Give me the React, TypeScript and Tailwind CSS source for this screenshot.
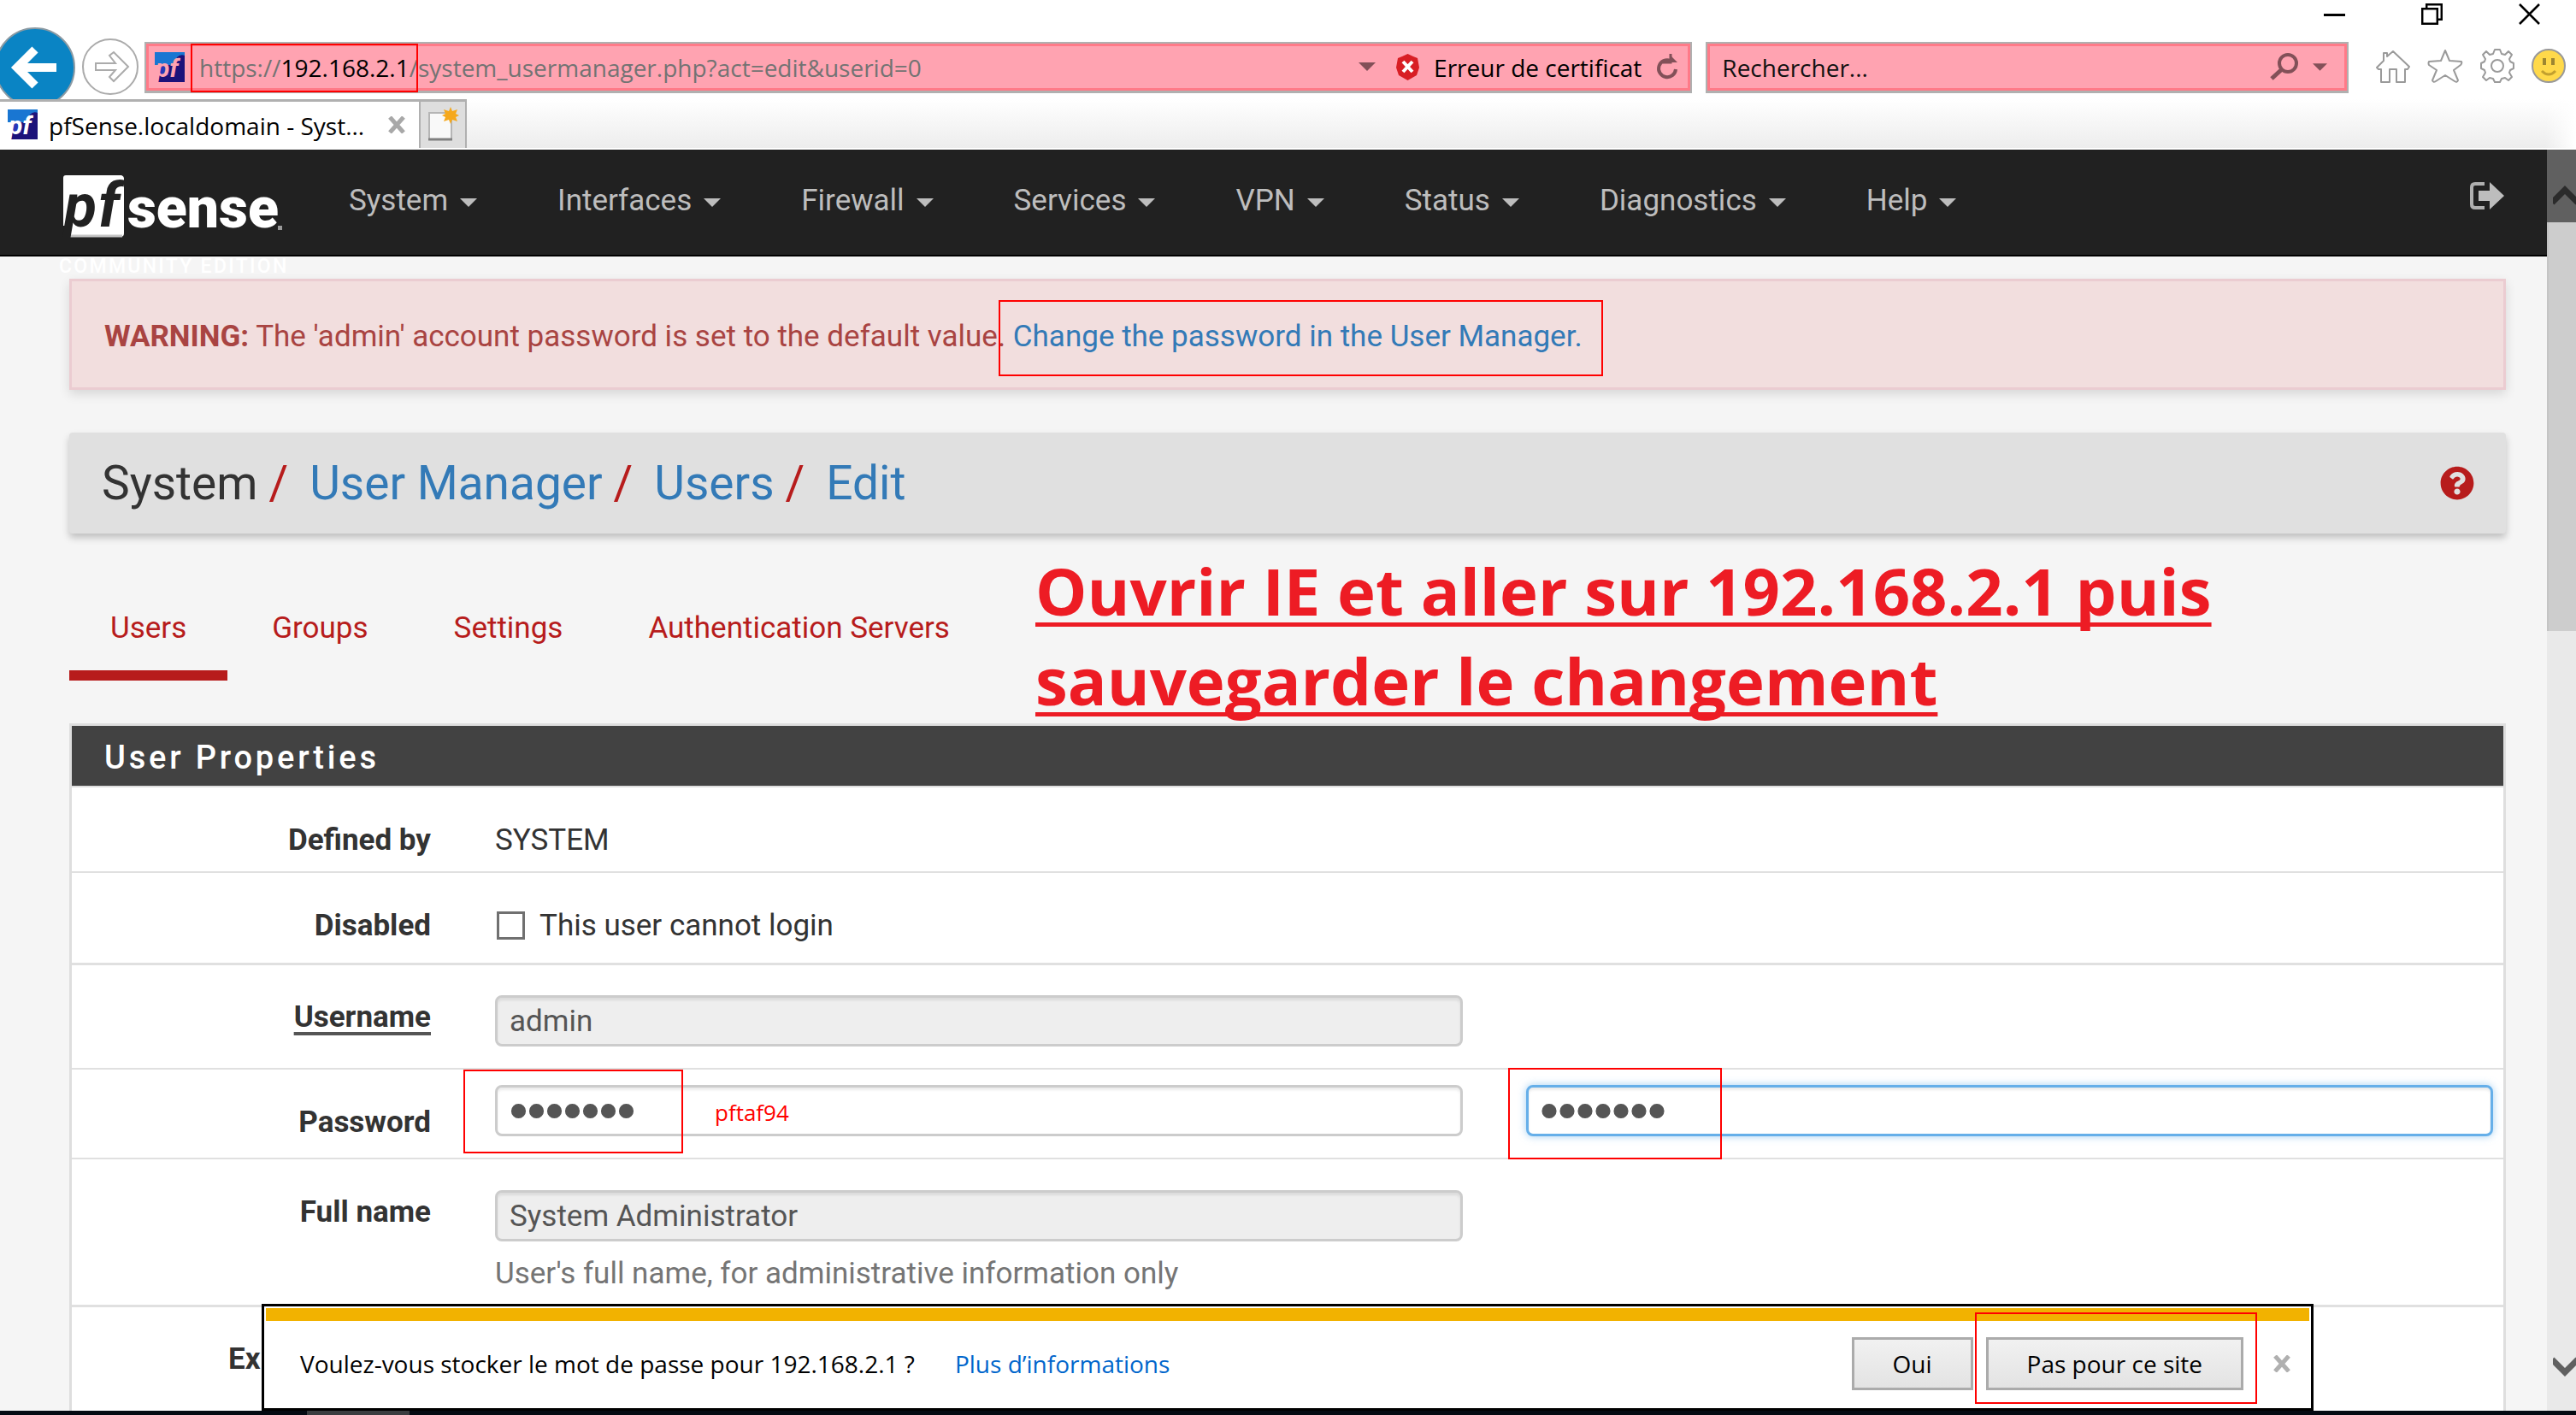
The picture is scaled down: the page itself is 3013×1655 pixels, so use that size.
import React from "react";
import { FaQuestionCircle } from "react-icons/fa";

const CHROME_FONT = "font-['Open_Sans','Noto_Sans',sans-serif]";
const PAGE_FONT = "font-[Roboto,'Liberation_Sans',sans-serif]";

function Favicon({ light }: { light: string }) {
  return (
    <svg className="h-[35px] w-[35px] shrink-0 overflow-visible" viewBox="0 0 35 35" aria-hidden="true">
      <path d="M0 0H35V4Q27 5 25 12L23 15H0Z" fill="#1976d2" />
      <path d="M4 35L6 15H22L26 6Q30 2 35 4V35Z" fill="#1c127a" />
      <path d="M6 17H16V27H5Z" fill="#2638b8" />
      <text x="1" y="29" fontFamily="Roboto, sans-serif" fontSize="30" fontWeight="700" fontStyle="italic" fill={light}>
        pf
      </text>
    </svg>
  );
}

function Caret({ className }: { className: string }) {
  return (
    <svg className={className} viewBox="0 0 20 10" aria-hidden="true">
      <path d="M0 0H20L10 10Z" fill="currentColor" />
    </svg>
  );
}

function WindowControls() {
  return (
    <div className="flex h-8 items-start justify-end gap-[89px] pr-[42px] pt-1 text-black">
      <button type="button" aria-label="Réduire">
        <svg className="block h-[25px] w-[25px]" viewBox="0 0 25 25">
          <path d="M0 13.500H25" stroke="currentColor" strokeWidth="3" />
        </svg>
      </button>
      <button type="button" aria-label="Restaurer">
        <svg className="block h-[25px] w-[25px]" viewBox="0 0 25 25" fill="none" stroke="currentColor" strokeWidth="2.500">
          <path d="M1.200 6.200H18.800V23.800H1.200Z" />
          <path d="M6.200 6V1.200H23.800V18.800H19" />
        </svg>
      </button>
      <button type="button" aria-label="Fermer">
        <svg className="block h-[25px] w-[25px]" viewBox="0 0 25 25" stroke="currentColor" strokeWidth="2.500">
          <path d="M1 1L24 24M24 1L1 24" />
        </svg>
      </button>
    </div>
  );
}

function AddressRow() {
  return (
    <div className="flex h-21 items-start">
      <button type="button" aria-label="Précédent" className="-ml-[6px] h-[84px] w-[94px] shrink-0 overflow-hidden">
        <svg className="block h-[94px] w-[94px]" viewBox="0 0 94 94">
          <circle cx="47" cy="47" r="46" fill="#0a84c4" stroke="#8b9aa3" strokeWidth="2" />
          <path d="M72 47H28" stroke="#fff" strokeWidth="10" fill="none" />
          <path d="M47 26L26 47L47 68" stroke="#fff" strokeWidth="10" fill="none" />
        </svg>
      </button>
      <button type="button" aria-label="Suivant" className="ml-2 mt-[13px] shrink-0">
        <svg className="block h-[66px] w-[66px]" viewBox="0 0 66 66" fill="none" stroke="#ababab" strokeWidth="2">
          <circle cx="33" cy="33" r="32" />
          <path d="M16 29H39L32 20L37 16L54 33L37 50L32 45L39 37H16Z" />
        </svg>
      </button>
      <div className="ml-[7px] mt-[17px] flex h-15 flex-[1812] items-center border-2 border-b-[3px] border-[#b0b0b0] bg-[#ffa3b1] text-[28px]">
        <div className="flex h-full w-full items-center border-[3px] border-[#ff7a88] pl-[7px] pr-[11px]">
          <Favicon light="#ffa3b1" />
          <div className="relative ml-[17px] whitespace-nowrap pt-[2px] leading-10 text-[#737373]">
            <span>
              https://<span className="text-black">192.168.2.1</span>/
            </span>
            <span>system_usermanager.php?act=edit&amp;userid=0</span>
            <div className="pointer-events-none absolute -left-[10px] -top-[6px] h-[57px] w-[266px] border-2 border-[#ff0000]" />
          </div>
          <div className="grow" />
          <button type="button" aria-label="Afficher la liste d’adresses" className="text-[#825058]">
            <Caret className="block h-[10px] w-5" />
          </button>
          <svg className="ml-6 h-[31px] w-[27px]" viewBox="0 0 27 31" aria-hidden="true">
            <path d="M13.500 0L20 3L25 5L27 16L24 25L13.500 31L3 25L0 16L2 5L7 3Z" fill="#d81e24" />
            <path d="M8 9L19 21M19 9L8 21" stroke="#fff" strokeWidth="4" />
          </svg>
          <span className="ml-[17px] whitespace-nowrap pt-[2px] text-black">Erreur de certificat</span>
          <button type="button" aria-label="Actualiser" className="ml-4">
            <svg className="block h-[31px] w-[27px]" viewBox="0 0 27 31" fill="none" stroke="#825058" strokeWidth="4">
              <path d="M18 8A10 10 0 1 0 24 18" />
              <path d="M18 0V10H9" strokeWidth="3" />
              <path d="M17 1L26 10H17Z" fill="#825058" stroke="none" />
            </svg>
          </button>
        </div>
      </div>
      <div className="ml-4 mt-[17px] flex h-15 flex-[750] items-center border-2 border-b-[3px] border-[#b0b0b0] bg-[#ffa3b1] text-[28px]">
        <div className="flex h-full w-full items-center border-[3px] border-[#ff7a88] pl-[14px] pr-5">
          <input
            type="text"
            aria-label="Rechercher"
            placeholder="Rechercher..."
            className="w-0 grow bg-transparent pt-[2px] leading-10 text-black outline-none placeholder:text-[#111] placeholder:opacity-100"
          />
          <button type="button" aria-label="Lancer la recherche" className="flex items-center gap-4 text-[#825058]">
            <svg className="block h-8 w-[34px]" viewBox="0 0 34 32" fill="none" stroke="currentColor">
              <circle cx="21" cy="12" r="10" strokeWidth="4" />
              <path d="M14 19L2 30" strokeWidth="5" />
            </svg>
            <Caret className="block h-[9px] w-[17px]" />
          </button>
        </div>
      </div>
      <div className="ml-8 mr-3 mt-[25px] flex shrink-0 gap-5">
        <button type="button" aria-label="Accueil">
          <svg className="block h-10 w-10" viewBox="0 0 40 40" fill="none" stroke="#9a9a9a" strokeWidth="2" strokeLinejoin="round">
            <path d="M1 22L9 14V5H13V9L20 3L39 21L37 24H34V39H24V24H16V39H6V24H3Z" />
          </svg>
        </button>
        <button type="button" aria-label="Favoris">
          <svg className="block h-10 w-[42px]" viewBox="0 0 42 40" fill="none" stroke="#9a9a9a" strokeWidth="2" strokeLinejoin="round">
            <path d="M21 2L26 14L40 15Q41 17 39 19L31 25L36 37Q35 40 32 38L21 31L10 38Q7 40 6 37L11 25L2 19Q1 17 2 15L16 14Z" />
          </svg>
        </button>
        <button type="button" aria-label="Outils">
          <svg className="block h-10 w-10" viewBox="0 0 40 40" fill="none" stroke="#9a9a9a" strokeWidth="2" strokeLinejoin="round">
            <path d="M17 1H23L25 6L29 7L33 3L37 7L34 12L35 15L39 17V23L35 25L34 28L37 33L33 37L29 34L25 35L23 39H17L15 35L11 34L7 37L3 33L6 28L5 25L1 23V17L5 15L6 12L3 7L7 3L11 7L15 6Z" />
            <circle cx="20" cy="20" r="7" />
          </svg>
        </button>
        <button type="button" aria-label="Commentaires">
          <svg className="block h-10 w-10" viewBox="0 0 40 40">
            <circle cx="20" cy="20" r="19" fill="#ffd94a" stroke="#999" strokeWidth="2" />
            <path d="M13 11H17V19H13ZM23 11H27V19H23Z" fill="#9d8631" />
            <path d="M12 26Q20 34 28 26" fill="none" stroke="#c2a02f" strokeWidth="3" />
          </svg>
        </button>
      </div>
    </div>
  );
}

function TabStrip() {
  return (
    <div className="flex h-15 items-stretch border-b-2 border-white bg-linear-to-b from-white to-[#ededed]">
      <div className="flex w-[490px] items-center border-t-[3px] border-[#b0b0b0] bg-white pl-[9px] text-[28px]">
        <Favicon light="#ffffff" />
        <span className="ml-[13px] whitespace-nowrap pt-[2px] leading-10 text-black">pfSense.localdomain - Syst...</span>
        <div className="grow" />
        <button type="button" aria-label="Fermer l’onglet" className="mr-4">
          <svg className="block h-5 w-5" viewBox="0 0 20 20" stroke="#a8a8a8" strokeWidth="5">
            <path d="M2 1L18 19M18 1L2 19" />
          </svg>
        </button>
      </div>
      <button
        type="button"
        aria-label="Nouvel onglet"
        className="w-14 border-x-2 border-t-[3px] border-[#b0b0b0] bg-[#dedede] pl-[9px]"
      >
        <svg className="block h-[42px] w-[38px]" viewBox="0 0 38 42">
          <path d="M1 7H27V38H1Z" fill="#f9f9f9" stroke="#b5b5b5" strokeWidth="2" />
          <path d="M0 38H28" stroke="#808080" strokeWidth="3" />
          <path d="M26 0L28 5L34 3L32 8L36 10L32 12L34 17L28 15L26 20L24 15L18 17L20 12L16 10L20 8L18 3L24 5Z" fill="#f5a81c" />
        </svg>
      </button>
      <div className="grow" />
      <div className="w-9 bg-linear-to-r from-transparent to-white" />
    </div>
  );
}

const MENUS = ["System", "Interfaces", "Firewall", "Services", "VPN", "Status", "Diagnostics", "Help"];

function Navbar() {
  return (
    <nav className={`flex h-[125px] items-start border-b-2 border-black bg-[#212121] ${PAGE_FONT}`}>
      <a href="#home" aria-label="pfSense Community Edition" className="relative ml-[69px] mt-[30px] block w-[292px] shrink-0">
        <svg className="block h-[74px] w-[262px] overflow-visible" viewBox="0 0 262 74">
          <path d="M8 0H73Q76 1 76 4V68Q76 72 72 72H12V59H5V3Q5 0 8 0Z" fill="#fff" />
          <path d="M12 71H74" stroke="#c4c4c4" strokeWidth="3" />
          <text x="6" y="60" fontFamily="Roboto, sans-serif" fontSize="70" fontWeight="700" fontStyle="italic" fill="#212121">
            p
          </text>
          <text x="46" y="60" fontFamily="Roboto, sans-serif" fontSize="72" fontWeight="700" fontStyle="italic" fill="#212121">
            f
          </text>
          <text x="80" y="61" fontFamily="Roboto, sans-serif" fontSize="66" fontWeight="900" fill="#fff">
            sense
          </text>
          <path d="M256 59H261V64H256Z" fill="#999" />
        </svg>
        <span className="absolute left-0 top-[95px] whitespace-nowrap text-[23px] font-medium leading-6 tracking-widest text-white">
          COMMUNITY EDITION
        </span>
      </a>
      <ul className="flex text-[35px] leading-[50px] text-[#bdbdbd]">
        {MENUS.map((name) => (
          <li key={name}>
            <button type="button" className="flex items-center gap-[14px] px-[47px] pt-[35px]">
              {name}
              <Caret className="mt-1 h-[10px] w-5" />
            </button>
          </li>
        ))}
      </ul>
      <div className="grow" />
      <a href="#logout" aria-label="Logout" className="mr-[50px] mt-[38px]">
        <svg className="block h-8 w-10" viewBox="0 0 40 32">
          <path d="M17 2H6Q2 2 2 6V26Q2 30 6 30H17" fill="none" stroke="#b0b0b0" strokeWidth="4" />
          <path d="M10 10H23V0L40 16L23 32V22H10Z" fill="#bdbdbd" />
        </svg>
      </a>
    </nav>
  );
}

function Warning() {
  return (
    <div className="border-[3px] border-[#ebccd1] bg-[#f2dede] px-[38px] pb-[34px] pt-10 text-[35px] leading-[50px] text-[#a94442] shadow-[0_5px_12px_rgba(0,0,0,0.12)]">
      <strong className="font-bold">WARNING:</strong> The 'admin' account password is set to the default value.{" "}
      <a href="#password" className="relative text-[#337ab7]">
        Change the password in the User Manager.
        <span className="pointer-events-none absolute -bottom-[26px] -left-[17px] -right-[24px] -top-[22px] border-2 border-[#ff0000]" />
      </a>
    </div>
  );
}

function Breadcrumb() {
  const links = ["User Manager", "Users", "Edit"];
  return (
    <header className="mt-[50px] flex h-[118px] items-center justify-between rounded-sm bg-[#e0e0e0] pl-[38px] pr-[37px] shadow-[0_5px_8px_rgba(0,0,0,0.22)]">
      <ol className="flex text-[55px] leading-[76px] text-[#333]">
        <li>System</li>
        {links.map((name) => (
          <li key={name} className="flex">
            <span className="mx-[13px] text-[#b71c1c]">/</span>
            <a href="#crumb" className="ml-3 text-[#337ab7]">
              {name}
            </a>
          </li>
        ))}
      </ol>
      <a href="#help" aria-label="Help for this page" className="text-[#b71c1c]">
        <FaQuestionCircle className="h-10 w-10" />
      </a>
    </header>
  );
}

function Tabs() {
  const tabs = ["Users", "Groups", "Settings", "Authentication Servers"];
  return (
    <ul className="mt-[86px] flex gap-1 text-[35px] leading-[50px] text-[#b71c1c]">
      {tabs.map((name, i) => (
        <li key={name}>
          <a href="#tab" className={i === 0 ? "block border-b-[12px] border-[#b71c1c] px-12 pb-6" : "block px-12 pb-9"}>
            {name}
          </a>
        </li>
      ))}
    </ul>
  );
}

const LABEL = "block pr-[38px] text-right font-bold text-[#333]";
const FIELD = "block h-15 w-full rounded-lg border-[3px] border-[#ccc] px-[14px] text-[#555] outline-none shadow-[inset_0_3px_3px_rgba(0,0,0,0.08)]";
const SECRET = "font-['Liberation_Sans',sans-serif] text-[60px] font-bold";
const GRID = "-mr-[25px] grid grid-cols-[458px_1fr_1fr]";

function UserForm() {
  return (
    <form className="mt-[50px] border-[3px] border-[#dedede] bg-white text-[35px] leading-[50px] text-[#333]">
      <h2 className="border-b-2 border-[#dedede] bg-[#424242] px-[38px] pb-2 pt-3 text-[38px] font-medium tracking-widest text-white">
        User Properties
      </h2>
      <div className="border-b-2 border-[#e0e0e0] pb-[11px] pt-[37px]">
        <div className={GRID}>
          <span className={LABEL}>Defined by</span>
          <span className="px-[37px]">SYSTEM</span>
        </div>
      </div>
      <div className="border-b-[3px] border-[#e0e0e0] pb-[18px] pt-[37px]">
        <div className={GRID}>
          <span className={LABEL}>Disabled</span>
          <label className="flex items-center gap-[17px] px-[39px]">
            <input type="checkbox" className="size-[33px] appearance-none border-[3px] border-[#707070] bg-white" />
            This user cannot login
          </label>
        </div>
      </div>
      <div className="border-b-2 border-[#e0e0e0] pb-[25px] pt-[35px]">
        <div className={GRID}>
          <label htmlFor="username" className={`${LABEL} pt-px underline decoration-[#555] decoration-4 underline-offset-[6px]`}>
            Username
          </label>
          <div className="px-[37px]">
            <input id="username" type="text" readOnly value="admin" className={`${FIELD} bg-[#eee] pt-[2px]`} />
          </div>
        </div>
      </div>
      <div className="border-b-2 border-[#e0e0e0] pb-[16px] pt-[18px]">
        <div className={GRID}>
          <label htmlFor="password" className={`${LABEL} pt-[19px]`}>
            Password
          </label>
          <div className="relative px-[37px]">
            <input id="password" type="password" readOnly value="pftaf94" className={`${FIELD} ${SECRET} bg-white`} />
            <div className="pointer-events-none absolute -top-[18px] left-0 h-[98px] w-[257px] border-2 border-[#ff0000]" />
            <span className={`absolute left-[294px] top-3 text-[26px] leading-10 text-[#ff0000] ${CHROME_FONT}`}>pftaf94</span>
          </div>
          <div className="relative px-[37px]">
            <input
              type="password"
              aria-label="Confirm password"
              readOnly
              value="pftaf94"
              className={`${SECRET} block h-15 w-full rounded-lg border-[3px] border-[#66afe9] bg-white px-[14px] text-[#555] shadow-[inset_0_3px_3px_rgba(0,0,0,0.08),0_0_10px_rgba(102,175,233,0.6)] outline-none`}
            />
            <div className="pointer-events-none absolute -top-5 left-4 h-[107px] w-[250px] border-2 border-[#ff0000]" />
          </div>
        </div>
      </div>
      <div className="border-b-[3px] border-[#e0e0e0] pb-[11px] pt-9">
        <div className={GRID}>
          <label htmlFor="fullname" className={`${LABEL} pt-px`}>
            Full name
          </label>
          <div className="px-[37px]">
            <input id="fullname" type="text" readOnly value="System Administrator" className={`${FIELD} bg-[#eee] pt-[2px]`} />
            <p className="mt-[13px] whitespace-nowrap text-[#757575]">User's full name, for administrative information only</p>
          </div>
        </div>
      </div>
      <div className="pb-[50px] pl-[183px] pt-9">
        <span className="font-bold">Ex</span>
      </div>
    </form>
  );
}

function Scrollbar() {
  return (
    <div className="flex w-[34px] shrink-0 flex-col overflow-hidden bg-[#e9e9e9]">
      <button type="button" aria-label="Scroll up" className="flex h-[85px] items-start bg-[#606060] pl-[7px] pt-[42px]">
        <svg className="block h-[23px] w-7 shrink-0" viewBox="0 0 28 23" fill="none" stroke="#2b2b2b" strokeWidth="7">
          <path d="M-1 20L14 5L29 20" />
        </svg>
      </button>
      <div className="h-[478px] border-l-2 border-[#c4c4c4] bg-[#cdcdcd]" />
      <div className="grow" />
      <button type="button" aria-label="Scroll down" className="mb-10 pl-[7px]">
        <svg className="block h-[23px] w-7" viewBox="0 0 28 23" fill="none" stroke="#606060" strokeWidth="7">
          <path d="M-1 3L14 18L29 3" />
        </svg>
      </button>
    </div>
  );
}

const BUTTON = "h-[62px] border-[3px] border-[#ababab] bg-linear-to-b from-[#f1f1f1] to-[#e3e3e3] px-[45px] text-black";

function PasswordPrompt() {
  return (
    <div
      role="alert"
      className={`absolute bottom-0 left-[306px] right-[307px] z-10 h-[125px] whitespace-nowrap border-[3px] border-black bg-white p-[2px] text-[28px] ${CHROME_FONT}`}
    >
      <div className="h-[15px] bg-[#f2b200]" />
      <div className="flex h-[100px] items-center pl-10 pr-[22px]">
        <span className="text-black">Voulez-vous stocker le mot de passe pour 192.168.2.1 ?</span>
        <a href="#infos" className="ml-[47px] text-[#0066cc]">
          Plus d’informations
        </a>
        <div className="grow" />
        <button type="button" className={BUTTON}>
          Oui
        </button>
        <div className="relative ml-[15px]">
          <button type="button" className={`${BUTTON} block`}>
            Pas pour ce site
          </button>
          <div className="pointer-events-none absolute -bottom-4 -left-[13px] -right-4 -top-[29px] border-2 border-[#ff0000]" />
        </div>
        <button type="button" aria-label="Fermer" className="ml-[35px]">
          <svg className="block h-5 w-5" viewBox="0 0 20 20" stroke="#b0b0b0" strokeWidth="5">
            <path d="M2 1L18 19M18 1L2 19" />
          </svg>
        </button>
      </div>
    </div>
  );
}

export default function App() {
  return (
    <div className={`flex h-screen flex-col overflow-hidden bg-white ${CHROME_FONT}`}>
      <WindowControls />
      <AddressRow />
      <TabStrip />
      <div className="relative flex min-h-0 grow">
        <div className="min-w-0 grow overflow-hidden bg-[#f5f5f5]">
          <Navbar />
          <main className={`relative ml-[81px] mr-12 pt-[26px] ${PAGE_FONT}`}>
            <Warning />
            <Breadcrumb />
            <Tabs />
            <UserForm />
            <p
              className={`absolute left-[1130px] top-[338px] text-[76px] font-bold leading-[105px] text-[#ed1c24] underline decoration-[5px] underline-offset-8 [text-decoration-skip-ink:none] ${CHROME_FONT}`}
            >
              Ouvrir IE et aller sur 192.168.2.1 puis
              <br />
              sauvegarder le changement
            </p>
          </main>
        </div>
        <Scrollbar />
        <PasswordPrompt />
      </div>
      <div className="h-[5px] shrink-0 bg-[#040a12] pl-[359px]">
        <div className="h-full w-[120px] bg-[#3a3d40]" />
      </div>
    </div>
  );
}
